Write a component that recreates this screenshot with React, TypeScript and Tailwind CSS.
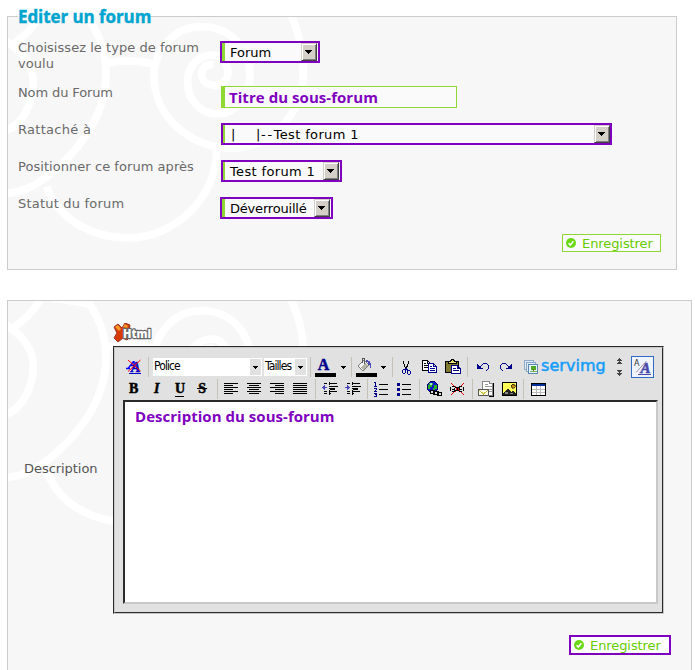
import React from 'react';

const VERDANA = "font-['DejaVu_Sans','Liberation_Sans',sans-serif]";
const TREBUCHET = "font-['Open_Sans','Noto_Sans',sans-serif] font-bold";

function Spirals({ top }: { top: string }) {
  return (
    <svg
      className={`pointer-events-none absolute left-0 ${top}`}
      width="310"
      height="240"
      viewBox="24 21 930 720"
      fill="none"
      stroke="#fff"
      strokeWidth="23"
    >
      <path d="M140 8 L268 30 C302 80 318 130 318 190 C318 330 220 440 135 505 C100 530 60 548 20 550" />
      <path d="M124 12 C100 55 65 85 36 104" />
      <path d="M16 92 C70 125 100 170 100 215 C100 280 65 345 20 360" />
      <path d="M322 160 C365 149 420 153 460 162" />
      <path d="M870 10 C900 70 912 130 910 195 C905 310 820 412 695 414 C560 414 462 310 462 200 C462 110 530 50 605 50 C690 50 750 115 750 192 C750 260 700 314 650 312 C600 310 563 270 563 215 C563 165 600 133 640 135 C672 138 686 170 684 198" />
      <path d="M684 185 C684 208 668 224 645 226 C615 226 600 205 606 184 C611 168 624 162 640 164" />
      <path d="M140 530 C180 640 290 685 390 684 C530 680 650 560 650 420" />
    </svg>
  );
}

function SelectBox({ label, box, strip, text, flush }: { label: React.ReactNode; box: string; strip: string; text: string; flush?: boolean }) {
  return (
    <div className={`flex h-[22px] border-2 border-[#7f00bf] bg-[#fafafa] ${box}`}>
      <div className={`shrink-0 bg-[#8fd733] ${strip}`} />
      <div className={`flex-1 whitespace-pre pt-px text-[13px] leading-[17px] text-black ${text}`}>{label}</div>
      <div
        className={`flex h-[18px] w-4 shrink-0 items-center justify-center border border-b-[#404040] border-l-[#d4d0c8] border-r-[#404040] border-t-[#d4d0c8] bg-[#d4d0c8] pr-px shadow-[inset_1px_1px_0_#fff,inset_-1px_-1px_0_#808080] ${flush ? '' : 'mr-px'}`}
      >
        <svg width="7" height="4" shapeRendering="crispEdges">
          <path d="M0 0h7v1h-7zM1 1h5v1h-5zM2 2h3v1h-3zM3 3h1v1h-1z" />
        </svg>
      </div>
    </div>
  );
}

function Row({ label, labelClass = '', top, children }: { label: string; labelClass?: string; top: string; children: React.ReactNode }) {
  return (
    <div className={`flex h-[22px] items-start ${top}`}>
      <div className={`-mt-px ml-[10px] w-[190px] shrink-0 whitespace-pre-line text-[13px] leading-4 text-[#6a6a6a] ${labelClass}`}>{label}</div>
      {children}
    </div>
  );
}

function SaveButton({ className }: { className: string }) {
  return (
    <button className={`flex items-center text-left text-[13px] text-[#66cc00] ${className}`}>
      <svg className="ml-[3px] shrink-0" width="10" height="10" viewBox="0 0 10 10">
        <circle cx="5" cy="5" r="5" fill="#6bd916" />
        <path d="M2.6 5.2L4.3 7L7.4 3.3" stroke="#fff" strokeWidth="1.6" fill="none" />
      </svg>
      <span className="ml-[6px] whitespace-nowrap leading-[15px] tracking-[-0.08px]">Enregistrer</span>
    </button>
  );
}

function Cell({ w, children }: { w: string; children?: React.ReactNode }) {
  return <div className={`flex h-[22px] shrink-0 items-center ${w}`}>{children}</div>;
}

function Sep({ w }: { w: string }) {
  return (
    <Cell w={w}>
      <div className="h-5 w-px bg-[#c5c2b5]" />
    </Cell>
  );
}

function Pix({ w = 16, h = 16, children }: { w?: number; h?: number; children: React.ReactNode }) {
  return (
    <svg className="shrink-0" width={w} height={h} viewBox={`0 0 ${w} ${h}`} fill="none" shapeRendering="crispEdges">
      {children}
    </svg>
  );
}

function Caret() {
  return (
    <Pix w={5} h={3}>
      <path d="M0 0h5v1h-5zM1 1h3v1h-3zM2 2h1v1h-1z" fill="#000" />
    </Pix>
  );
}

function MiniSelect({ label, w }: { label: string; w: string }) {
  return (
    <div className={`flex h-[18px] border border-white bg-white ${w}`}>
      <div className="flex-1 whitespace-nowrap font-['DejaVu_Sans_Condensed','DejaVu_Sans',sans-serif] text-[12px] leading-[15px] tracking-[-0.9px] text-black">
        {label}
      </div>
      <div className="flex w-[11px] shrink-0 items-center justify-center bg-[#e1e1e1] pt-px">
        <Caret />
      </div>
    </div>
  );
}

function Align({ d }: { d: string }) {
  return (
    <Pix w={15} h={12}>
      <path d={d} stroke="#000" />
    </Pix>
  );
}

const LETTER = "font-['Liberation_Serif',serif] text-[14px] font-bold leading-none text-black [-webkit-text-stroke:0.5px_#000]";
const SERIF = "'Liberation Serif', serif";

export default function App() {
  return (
    <div className={`h-[670px] w-[695px] overflow-hidden bg-white pl-[7px] pt-[5px] ${VERDANA}`}>
      <fieldset className="relative h-[265px] w-[670px] border border-[#ccc] bg-[#f7f7f7]">
        <legend className={`relative z-10 ml-[10px] h-[23px] w-[133px] whitespace-nowrap text-[17px] leading-6 tracking-[-0.08px] text-[#00a5cf] [-webkit-text-stroke:0.4px_#00a5cf] ${TREBUCHET}`}>
          Editer un forum
        </legend>
        <Spirals top="-top-[11px]" />
        <div className="relative h-[241px]">
          <Row label={'Choisissez le type de forum\nvoulu'} labelClass="tracking-[0.04px]" top="mt-[13px]">
            <div className="ml-[12px]">
              <SelectBox label="Forum" box="w-[100px]" strip="w-[3px]" text="pl-[5px]" />
            </div>
          </Row>
          <Row label="Nom du Forum" labelClass="tracking-[-0.12px]" top="mt-[23px]">
            <div className={`ml-[13px] h-[22px] w-[236px] border border-l-4 border-[#8fd733] bg-[#fafafa] pl-1 text-[15px] leading-5 tracking-[0.05px] text-[#7f00bf] ${TREBUCHET}`}>
              Titre du sous-forum
            </div>
          </Row>
          <Row label="Rattaché à" labelClass="tracking-[0.3px]" top="mt-[15px]">
            <div className="ml-[13px]">
              <SelectBox
                label={
                  <>
                    <span className="tracking-[0.8px]">{'|\u00a0\u00a0\u00a0\u00a0|'}</span>
                    <span className="tracking-[1.6px]">--</span>
                    <span className="tracking-[0.35px]">Test forum 1</span>
                  </>
                }
                box="w-[391px]"
                strip="w-[2px]"
                text="pl-[6px]"
                flush
              />
            </div>
          </Row>
          <Row label="Positionner ce forum après" labelClass="tracking-[0.05px]" top="mt-[15px]">
            <div className="ml-[13px]">
              <SelectBox label="Test forum 1" box="w-[121px]" strip="w-[2px]" text="pl-[5px] tracking-[0.35px]" />
            </div>
          </Row>
          <Row label="Statut du forum" labelClass="tracking-[0.2px]" top="mt-[15px]">
            <div className="ml-[12px]">
              <SelectBox label="Déverrouillé" box="w-[113px]" strip="w-[3px]" text="pl-[5px] tracking-[-0.2px]" />
            </div>
          </Row>
          <SaveButton className="ml-[554px] mt-[15px] h-[18px] w-[99px] border border-[#8fd733] bg-[#fafafa]" />
        </div>
      </fieldset>

      <div className="relative mt-[30px] h-[400px] w-[685px] border border-[#ccc] bg-[#f7f7f7]">
        <Spirals top="top-0" />
        <div className="relative flex">
          <div className="ml-4 mt-[160px] w-[89px] shrink-0 text-[13px] leading-4 tracking-[-0.05px] text-[#555]">Description</div>
          <div className="w-[560px]">
            <div className="mt-[21px] flex h-6">
              <svg className="mt-px" width="42" height="20" viewBox="0 0 42 20">
                <path d="M1 4L5 1L9 5L12 0L17 2L16 8L18 12L14 17L10 15L5 19L1 15L4 10Z" fill="#d63a05" stroke="#9b3427" />
                <path d="M2 4L5 2L8 6L6 8ZM10 4L12 1L15 3L14 5Z" fill="#f79a2a" />
                <text x="10" y="15" textLength="28" lengthAdjust="spacingAndGlyphs" fontFamily="'Open Sans', sans-serif" fontWeight="800" fontSize="12" fill="#fff" stroke="#666" strokeWidth="2.4" strokeLinejoin="round" paintOrder="stroke">
                  Html
                </text>
              </svg>
            </div>
            <div className="h-[268px] w-[551px] border border-b-[#c8c8c8] border-l-[#2b2b2b] border-r-[#c8c8c8] border-t-[#2b2b2b]">
              <div className="h-[266px] w-[549px] border border-b-[#2b2b2b] border-l-[#c8c8c8] border-r-[#2b2b2b] border-t-[#c8c8c8] bg-[#e1e1e1]">
                <div className="flex pl-[11px] pt-2">
                  <Cell w="w-[22px]">
                    <svg className="shrink-0" width="17" height="16" viewBox="0 0 17 16">
                      <path d="M0 9.500h4M2 9.500L7.500 2.500M4 6.500h4M8 2v7" stroke="#00f" strokeWidth="1.300" fill="none" />
                      <text x="5" y="13" fontFamily={SERIF} fontStyle="italic" fontWeight="700" fontSize="14" fill="#0000c8" stroke="#0000c8" strokeWidth=".5">A</text>
                      <path d="M3 14h12v1H3z" fill="#0000c8" />
                      <path d="M2 1L14.500 12M14.500 1L2 12.500" stroke="#f00" fill="none" />
                    </svg>
                  </Cell>
                  <Sep w="w-[5px]" />
                  <Cell w="w-[111px]"><MiniSelect label="Police" w="w-[109px]" /></Cell>
                  <Cell w="w-[46px]"><MiniSelect label="Tailles" w="w-[43px]" /></Cell>
                  <Sep w="w-[5px]" />
                  <Cell w="w-[26px]">
                    <div className="mt-px flex h-[19px] w-[21px] flex-col items-center border-b-4 border-black pr-[4px]">
                      <span className="font-['Liberation_Serif',serif] text-[16px] font-bold leading-[13px] text-[#00008b] [-webkit-text-stroke:0.5px_#00008b]">A</span>
                    </div>
                  </Cell>
                  <Cell w="w-[10px]"><Caret /></Cell>
                  <Sep w="w-[5px]" />
                  <Cell w="w-[25px]">
                    <Pix w={21} h={20}>
                      <path d="M2 9L8 3L13 8L7 14Z" fill="#f4f4f4" stroke="#777" />
                      <path d="M5 10L9 6L12 8L7 13Z" fill="#b5b5a8" />
                      <path d="M6.500 6V1.500h2v5" stroke="#555" />
                      <path d="M10 3h2v1h2v2h1v5h-1v-3h-2v-3h-2z" fill="#4a4ab0" />
                      <path d="M0 16h21v4h-21z" fill="#000" />
                    </Pix>
                  </Cell>
                  <Cell w="w-[11px]"><Caret /></Cell>
                  <Sep w="w-[9px]" />
                  <Cell w="w-[21px]">
                    <Pix w={11} h={15}>
                      <path d="M2.500 1v3M3.500 4v3M4.500 7v2M7.500 1v3M6.500 4v3M5.500 6v3" stroke="#000" />
                      <path d="M4.500 8v3M5.500 8v2M6.500 9v3M2 9.500h2M1.500 10v3M2 13.500h2M4.500 10v3M7 10.500h2M6.500 11v3M7 14.500h2M9.500 11v3" stroke="#00008b" />
                    </Pix>
                  </Cell>
                  <Cell w="w-[23px]">
                    <Pix>
                      <path d="M.5 1.500h5l3 3v7h-8zM5.500 1.500v3h3M2 4.500h2M2 6.500h4M2 8.500h4" stroke="#000" fill="#fff" />
                      <path d="M6.500 4.500h5l3 3v6h-8zM11.500 4.500v3h3M8 7.500h2M8 9.500h5M8 11.500h5" stroke="#00008b" fill="#fff" />
                    </Pix>
                  </Cell>
                  <Cell w="w-[22px]">
                    <Pix w={17}>
                      <path d="M.5 2.500h13v11h-13z" fill="#7f7a30" stroke="#000" />
                      <path d="M3.500 4.500v-2h2l1-2h2l1 2h2v2z" fill="#e8e070" stroke="#000" />
                      <path d="M6.500 6.500h6l3 3v5h-9zM12.500 6.500v3h3M8 9.500h3M8 11.500h6" stroke="#00008b" fill="#fff" />
                    </Pix>
                  </Cell>
                  <Sep w="w-[10px]" />
                  <Cell w="w-[22px]">
                    <Pix w={13} h={10}>
                      <path d="M0 2h1v1h1v1h1v1h1v1h2v1h-6z" fill="#00008b" />
                      <path d="M3 4.500h1M4 3.500h1M5 2.500h1M6 1.500h4M10 2.500h1M11.500 3v4M10.500 7v1M9.500 8v1" stroke="#00008b" />
                    </Pix>
                  </Cell>
                  <Cell w="w-[25px]">
                    <Pix w={13} h={10}>
                      <path d="M13 2h-1v1h-1v1h-1v1h-1v1h-2v1h6z" fill="#00008b" />
                      <path d="M9 4.500h1M8 3.500h1M7 2.500h1M3 1.500h4M2 2.500h1M1.500 3v4M2.500 7v1M3.500 8v1" stroke="#00008b" />
                    </Pix>
                  </Cell>
                  <Cell w="w-[17px]">
                    <Pix w={15}>
                      <path d="M.5 1.500h9v9h-9z" fill="#dcebf3" stroke="#8dabc9" />
                      <path d="M2.500 3.500h9v9h-9z" fill="#dcebf3" stroke="#8dabc9" />
                      <path d="M4.500 5.500h9v9h-9z" fill="#e8f4ff" stroke="#5b88b6" />
                      <path d="M7 7h5v4h-5z" fill="#4faa27" />
                      <path d="M9 10h1v3h-1z" fill="#8a5a20" />
                      <path d="M6 12h7v1h-7z" fill="#6fb857" />
                    </Pix>
                  </Cell>
                  <Cell w="w-[75px]">
                    <span className="-mt-[3px] text-[16px] leading-5 tracking-[0.05px] text-[#149dfa] [-webkit-text-stroke:0.5px_#149dfa]">servimg</span>
                  </Cell>
                  <Cell w="w-[15px]">
                    <Pix w={7} h={18}>
                      <path d="M3 0h1v1h1v1h1v1h-2v1h1v1h1v1h-5v-1h1v-1h1v-1h-2v-1h1v-1h1z" fill="#444" />
                      <path d="M3 18h1v-1h1v-1h1v-1h-2v-1h1v-1h1v-1h-5v1h1v1h1v1h-2v1h1v1h1z" fill="#444" />
                    </Pix>
                  </Cell>
                  <div className="flex h-[22px] w-[23px] shrink-0 border border-[#316ac5] bg-[#eff3fb]">
                    <svg className="shrink-0" width="21" height="20" viewBox="0 0 21 20">
                      <text x="2" y="9" fontFamily="'DejaVu Sans', sans-serif" fontSize="8" fill="#333">A</text>
                      <path d="M4 15.500L14.500 4" stroke="#999" />
                      <text x="8.500" y="16" fontFamily={SERIF} fontStyle="italic" fontWeight="700" fontSize="15" fill="#4848a8" stroke="#4848a8" strokeWidth=".5">A</text>
                      <path d="M6 17h13v1H6z" fill="#4848a8" />
                    </svg>
                  </div>
                </div>
                <div className="flex pl-[14px]">
                  <Cell w="w-[23px]"><span className={LETTER}>B</span></Cell>
                  <Cell w="w-[23px]"><span className={`${LETTER} pl-0.5 italic`}>I</span></Cell>
                  <Cell w="w-[22px]"><span className={`${LETTER} h-[15px] w-[9px] border-b border-black text-[12px]`}>U</span></Cell>
                  <Cell w="w-[20px]">
                    <span className={`${LETTER} whitespace-pre line-through`}>{'\u200aS\u200a'}</span>
                  </Cell>
                  <Sep w="w-[7px]" />
                  <Cell w="w-[23px]"><Align d="M0 .5h14M0 2.500h9M0 4.500h14M0 6.500h9M0 8.500h14M0 10.500h9" /></Cell>
                  <Cell w="w-[23px]"><Align d="M0 .5h14M2 2.500h10M0 4.500h14M2 6.500h10M0 8.500h14M2 10.500h10" /></Cell>
                  <Cell w="w-[23px]"><Align d="M0 .5h14M5 2.500h9M0 4.500h14M5 6.500h9M0 8.500h14M5 10.500h9" /></Cell>
                  <Cell w="w-[22px]"><Align d="M0 .5h14M0 2.500h14M0 4.500h14M0 6.500h14M0 8.500h14M0 10.500h14" /></Cell>
                  <Sep w="w-[7px]" />
                  <Cell w="w-[23px]">
                    <Pix h={14}>
                      <path d="M2 1.500h3M7 1.500h8M8 4.500h8M2 9.500h3M7 9.500h8M2 11.500h3M7 11.500h2" stroke="#000" />
                      <path d="M7.500 0v14" stroke="#000" strokeDasharray="1 1" />
                      <path d="M8 6h5v2h-5z" fill="#000" />
                      <path d="M0 5h1v-1h1v-1h1v2h2v1h-2v2h-1v-1h-1v-1h-1z" fill="#4848b8" />
                    </Pix>
                  </Cell>
                  <Cell w="w-[22px]">
                    <Pix h={14}>
                      <path d="M2 1.500h3M7 1.500h8M8 4.500h8M2 9.500h3M7 9.500h8M2 11.500h3M7 11.500h2" stroke="#000" />
                      <path d="M7.500 0v14" stroke="#000" strokeDasharray="1 1" />
                      <path d="M8 6h5v2h-5z" fill="#000" />
                      <path d="M5 5h-1v-1h-1v-1h-1v2h-2v1h2v2h1v-1h1v-1h1z" fill="#4848b8" />
                    </Pix>
                  </Cell>
                  <Sep w="w-[7px]" />
                  <Cell w="w-[23px]">
                    <Pix w={15} h={15}>
                      <path d="M5 2.500h9M5 7.500h9M5 12.500h9" stroke="#000" />
                      <path d="M0 .5h2M1.500 0v4M0 4.500h3M0 6.500h2M2.500 6v2M1 8.500h1M0 9.500h3M0 11.500h3M2.500 11v4M1 12.500h1M0 14.500h3" stroke="#00008b" />
                    </Pix>
                  </Cell>
                  <Cell w="w-[22px]">
                    <Pix w={15} h={13}>
                      <path d="M5 1.500h9M5 6.500h9M5 11.500h9" stroke="#000" />
                      <path d="M0 0h3v3h-3zM0 5h3v3h-3zM0 10h3v3h-3z" fill="#00008b" />
                    </Pix>
                  </Cell>
                  <Sep w="w-[7px]" />
                  <Cell w="w-[24px]">
                    <Pix>
                      <circle cx="6.500" cy="6" r="5.500" fill="#1212c8" stroke="#00006b" />
                      <path d="M3 2h4v2h-1v2h-2v2h-2v-4h1zM8 4h3v4h-2v2h-2v-3h1z" fill="#27b327" />
                      <path d="M4 2h2v2h-2z" fill="#9fe8c8" />
                      <path d="M4.500 9.500h4v3h-4zM11.500 11.500h4v3h-4zM7.500 10.500h5v3h-5z" stroke="#000" fill="#ddd" />
                    </Pix>
                  </Cell>
                  <Cell w="w-[22px]">
                    <Pix w={15} h={14}>
                      <path d="M1 1L14 13M14 1L1 13" stroke="#e00000" />
                      <path d="M2 4.500h3M2 9.500h3M.5 5v4M4.500 6v3M9 4.500h3M9 9.500h3M9.500 5v3M13.500 5v4M5 5.500h4M5 8.500h4M2 7.500h3M9 7.500h3M7.500 5v4" stroke="#000" />
                    </Pix>
                  </Cell>
                  <Sep w="w-[6px]" />
                  <Cell w="w-[24px]">
                    <Pix w={17}>
                      <path d="M4.500 .5h7v2h3v12h-10z" stroke="#888" fill="#fff" />
                      <path d="M15.500 2v13M11 15.500h5" stroke="#000" />
                      <path d="M7 3.500h3M7 5.500h7M11 8.500h3M11 10.500h3" stroke="#999" />
                      <path d="M.5 8.500h10v6h-10z" fill="#ffffe8" stroke="#555" />
                      <path d="M1 9L5.500 13L10 9" stroke="#c8bf3a" />
                    </Pix>
                  </Cell>
                  <Cell w="w-[21px]">
                    <Pix w={15} h={14}>
                      <path d="M.5 .5h14v13h-14z" fill="#ffff58" stroke="#000" />
                      <path d="M1 11h1v-1h1v-1h1v-1h1v-1h2v1h1v1h1v1h1v-1h2v1h1v1h1v2h-13z" fill="#222" />
                      <path d="M3 10h3v2h-3zM8 11h3v1h-3z" fill="#888" />
                      <path d="M10 2h2v1h1v2h-1v1h-2v-1h-1v-2h1z" fill="#c89000" stroke="#000" strokeWidth=".5" />
                    </Pix>
                  </Cell>
                  <Sep w="w-[8px]" />
                  <Cell w="w-[16px]">
                    <Pix w={15} h={13}>
                      <path d="M.5 .5h14v12h-14z" fill="#fff" stroke="#000" />
                      <path d="M1 1h13v2h-13z" fill="#002f9c" />
                      <path d="M1 6.500h13M1 9.500h13M5.500 3v9M9.500 3v9" stroke="#bbb" />
                    </Pix>
                  </Cell>
                </div>
                <div className={`ml-2 h-[204px] w-[535px] border-2 border-b-[#c8c8c8] border-l-[#2b2b2b] border-r-[#c8c8c8] border-t-[#2b2b2b] bg-white pl-[10px] pt-[2px] text-[15px] leading-6 tracking-[0.03px] text-[#7f00bf] ${TREBUCHET}`}>
                  Description du sous-forum
                </div>
              </div>
            </div>
            <SaveButton className="ml-[456px] mt-[21px] h-5 w-[102px] border-2 border-[#7f00bf] bg-white" />
          </div>
        </div>
      </div>
    </div>
  );
}
